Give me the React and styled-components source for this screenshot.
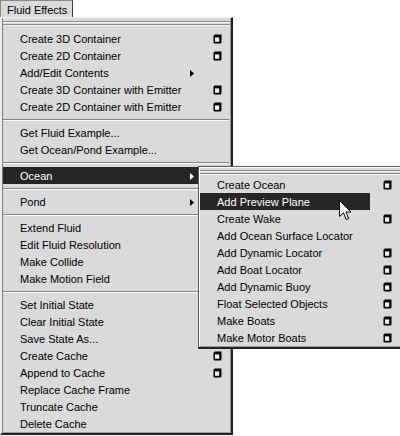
import React from 'react';
import styled, { createGlobalStyle } from 'styled-components';

const Global = createGlobalStyle`
  html, body { margin: 0; padding: 0; background: #ffffff; }
  body { font-family: "Liberation Sans", Arial, sans-serif; }
`;

const Screen = styled.div`
  position: relative;
  width: 400px;
  height: 436px;
  overflow: hidden;
  background: #ffffff;
`;

const Tab = styled.div`
  width: 73px;
  height: 17px;
  box-sizing: border-box;
  border-top: 1px solid #8a8a8a;
  border-left: 1px solid #8a8a8a;
  border-right: 1px solid #3c3c3c;
  background: #dadada;
  color: #000;
  font-size: 11px;
  line-height: 16px;
  padding: 1px 0 0 6px;
  white-space: nowrap;
`;

const MenuFrame = styled.div`
  width: ${p => p.$w}px;
  box-sizing: border-box;
  border-top: 1px solid ${p => p.$sub ? '#5a5a5a' : '#f2f2f2'};
  border-left: ${p => p.$sub ? '1px solid #5a5a5a' : '2px solid #ececec'};
  border-right: 2px solid #222;
  border-bottom: 2px solid #222;
  background: #dadada;
`;

const MenuBody = styled.div`
  display: flex;
  flex-direction: column;
  border-left: 1px solid ${p => p.$sub ? '#ffffff' : '#808080'};
  border-top: ${p => p.$sub ? '1px solid #ffffff' : '0'};
  border-right: 1px solid #9a9a9a;
  border-bottom: 1px solid #9a9a9a;
`;

const SubMenuLayer = styled.div`
  position: absolute;
  left: 198px;
  top: 166px;
`;

const TearOff = styled.div`
  display: flex;
  flex-direction: column;
  gap: 1px;
  height: ${p => p.$h}px;
  box-sizing: border-box;
  padding-top: ${p => p.$pt}px;
`;

const TearLine = styled.div`
  height: 1px;
  background: #8a8a8a;
  border-bottom: 1px solid #f4f4f4;
`;

const Separator = styled.div`
  height: 9px;
  box-sizing: border-box;
  padding: 4px 1px 0 0;
`;

const SepLine = styled.div`
  height: 1px;
  background: #858585;
  border-bottom: 1px solid #fafafa;
`;

const Row = styled.div`
  display: flex;
  height: 17px;
  font-size: 11px;
`;

const Label = styled.div`
  flex: 1;
  display: flex;
  align-items: center;
  box-sizing: border-box;
  padding: 1px 6px 0 17px;
  line-height: 16px;
  background: ${p => (p.$active ? '#262626' : 'transparent')};
  color: ${p => (p.$active ? '#ffffff' : '#000000')};
  white-space: nowrap;
`;

const Text = styled.span`
  flex: 1;
`;

const OptCol = styled.div`
  width: 30px;
  box-sizing: border-box;
  display: flex;
  align-items: center;
  justify-content: flex-end;
  padding-right: 8px;
`;

const Cursor = styled.svg`
  position: absolute;
  left: 339px;
  top: 200px;
`;

const OptionBox = () => (
  <svg width="9" height="10" viewBox="0 0 9 10">
    <path d="M2.2 0.5 H8.5 V8.2 Q8.5 9.5 7.2 9.5 H1.6 Q0.5 9.5 0.5 8.4 V2.2 Q0.5 0.5 2.2 0.5 Z" fill="#000" />
    <rect x="2" y="3.4" width="4.2" height="4.4" fill="#f0f0f0" />
  </svg>
);

const Arrow = ({ color }) => (
  <svg width="4" height="7" viewBox="0 0 4 7">
    <path d="M0 0 L4 3.5 L0 7 Z" fill={color} />
  </svg>
);

const mainItems = [
  { t: 'Create 3D Container', opt: true },
  { t: 'Create 2D Container', opt: true },
  { t: 'Add/Edit Contents', arrow: true },
  { t: 'Create 3D Container with Emitter', opt: true },
  { t: 'Create 2D Container with Emitter', opt: true },
  { sep: true },
  { t: 'Get Fluid Example...' },
  { t: 'Get Ocean/Pond Example...' },
  { sep: true },
  { t: 'Ocean', arrow: true, active: true },
  { sep: true },
  { t: 'Pond', arrow: true },
  { sep: true },
  { t: 'Extend Fluid' },
  { t: 'Edit Fluid Resolution' },
  { t: 'Make Collide' },
  { t: 'Make Motion Field' },
  { sep: true },
  { t: 'Set Initial State' },
  { t: 'Clear Initial State' },
  { t: 'Save State As...' },
  { t: 'Create Cache', opt: true },
  { t: 'Append to Cache', opt: true },
  { t: 'Replace Cache Frame' },
  { t: 'Truncate Cache' },
  { t: 'Delete Cache' },
];

const oceanItems = [
  { t: 'Create Ocean', opt: true },
  { t: 'Add Preview Plane', active: true },
  { t: 'Create Wake', opt: true },
  { t: 'Add Ocean Surface Locator' },
  { t: 'Add Dynamic Locator', opt: true },
  { t: 'Add Boat Locator', opt: true },
  { t: 'Add Dynamic Buoy', opt: true },
  { t: 'Float Selected Objects', opt: true },
  { t: 'Make Boats', opt: true },
  { t: 'Make Motor Boats', opt: true },
];

const MenuItems = ({ items }) =>
  items.map((it, i) =>
    it.sep ? (
      <Separator key={i}>
        <SepLine />
      </Separator>
    ) : (
      <Row key={i}>
        <Label $active={it.active}>
          <Text>{it.t}</Text>
          {it.arrow && <Arrow color={it.active ? '#fff' : '#000'} />}
        </Label>
        <OptCol>{it.opt && <OptionBox />}</OptCol>
      </Row>
    )
  );

export default function App() {
  return (
    <Screen>
      <Global />
      <Tab>Fluid Effects</Tab>
      <MenuFrame $w={233}>
        <MenuBody>
          <TearOff $h={12} $pt={3}>
            <TearLine />
            <TearLine />
          </TearOff>
          <MenuItems items={mainItems} />
        </MenuBody>
      </MenuFrame>
      <SubMenuLayer>
        <MenuFrame $w={205} $sub>
          <MenuBody $sub>
            <TearOff $h={8} $pt={2}>
              <TearLine />
              <TearLine />
            </TearOff>
            <MenuItems items={oceanItems} />
          </MenuBody>
        </MenuFrame>
      </SubMenuLayer>
      <Cursor width="13" height="21" viewBox="0 0 13 21">
        <path
          d="M0.5 0.5 L0.5 16.5 L4.5 12.8 L7.2 19.5 L9.6 18.5 L7 12 L12 12 Z"
          fill="#fff"
          stroke="#000"
          strokeWidth="1"
          strokeLinejoin="miter"
        />
      </Cursor>
    </Screen>
  );
}
